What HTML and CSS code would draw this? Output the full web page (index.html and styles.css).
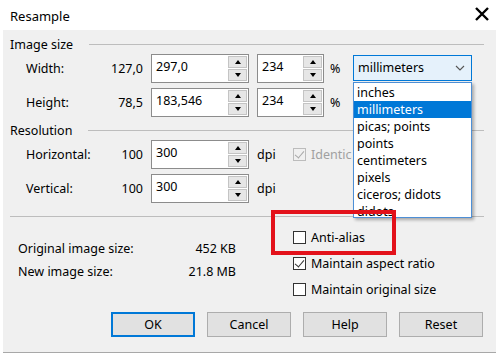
FILE: index.html
```html
<!DOCTYPE html>
<html lang="en">
<head>
    <meta charset="UTF-8">
    <title>Resample</title>
    <link rel="stylesheet" href="styles.css">
</head>
<body>
    <div class="window">
        <div class="titlebar">
            <span class="title">Resample</span>
            <svg class="close" width="14" height="14" viewBox="0 0 14 14">
                <path d="M1 1 L13 13 M13 1 L1 13" stroke="#000" stroke-width="2.4" />
            </svg>
        </div>

        <div class="client">
            <div class="group-head"><span>Image size</span><span class="rule"></span></div>
            <div class="row">
                <span class="label">Width:</span>
                <span class="orig">127,0</span>
                <div class="spin wide">
                    <span class="val">297,0</span>
                    <div class="arrows"><span class="btn up"></span><span class="btn down"></span></div>
                </div>
                <div class="spin narrow">
                    <span class="val">234</span>
                    <div class="arrows"><span class="btn up"></span><span class="btn down"></span></div>
                </div>
                <span class="unit pct">%</span>
                <div class="combo">
                    <span>millimeters</span>
                    <svg width="10" height="6" viewBox="0 0 10 6"><path d="M1 1 L5 5 L9 1" fill="none" stroke="#555" stroke-width="1.1" /></svg>
                </div>
            </div>
            <div class="row">
                <span class="label">Height:</span>
                <span class="orig">78,5</span>
                <div class="spin wide">
                    <span class="val">183,546</span>
                    <div class="arrows"><span class="btn up"></span><span class="btn down"></span></div>
                </div>
                <div class="spin narrow">
                    <span class="val">234</span>
                    <div class="arrows"><span class="btn up"></span><span class="btn down"></span></div>
                </div>
                <span class="unit pct">%</span>
            </div>

            <div class="group-head second"><span>Resolution</span><span class="rule"></span></div>
            <div class="row">
                <span class="label">Horizontal:</span>
                <span class="orig">100</span>
                <div class="spin wide">
                    <span class="val">300</span>
                    <div class="arrows"><span class="btn up"></span><span class="btn down"></span></div>
                </div>
                <span class="unit">dpi</span>
                <label class="check disabled">
                    <span class="box checked"></span>
                    <span class="clip">Identical values</span>
                </label>
            </div>
            <div class="row">
                <span class="label">Vertical:</span>
                <span class="orig">100</span>
                <div class="spin wide">
                    <span class="val">300</span>
                    <div class="arrows"><span class="btn up"></span><span class="btn down"></span></div>
                </div>
                <span class="unit">dpi</span>
            </div>

            <div class="separator"></div>

            <div class="bottom">
                <div class="info">
                    <div class="info-row"><span>Original image size:</span><span>452 KB</span></div>
                    <div class="info-row"><span>New image size:</span><span>21.8 MB</span></div>
                </div>
                <div class="options">
                    <label class="check"><span class="box"></span><span>Anti-alias</span></label>
                    <label class="check"><span class="box checked"></span><span>Maintain aspect ratio</span></label>
                    <label class="check"><span class="box"></span><span>Maintain original size</span></label>
                </div>
            </div>

            <div class="buttons">
                <button class="default">OK</button>
                <button>Cancel</button>
                <button>Help</button>
                <button>Reset</button>
            </div>
        </div>

        <ul class="dropdown">
            <li>inches</li>
            <li class="selected">millimeters</li>
            <li>picas; points</li>
            <li>points</li>
            <li>centimeters</li>
            <li>pixels</li>
            <li>ciceros; didots</li>
            <li>didots</li>
        </ul>

        <div class="highlight"></div>
    </div>
</body>
</html>
```

FILE: styles.css
```css
body {
    margin: 0;
    font-family: "Noto Sans", "Open Sans", sans-serif;
    font-size: 12.5px;
    color: #000;
    background: #fff;
}
.window {
    position: relative;
    width: 500px;
    height: 355px;
    background: #fff;
    overflow: hidden;
}
.titlebar {
    height: 30px;
    display: flex;
    align-items: center;
    justify-content: space-between;
    padding: 0 11px 0 10px;
}
.title {
    font-size: 13px;
    margin-top: 1px;
}
.close {
    margin-top: -2px;
}
.client {
    margin: 0 4px 0 3px;
    height: 322px;
    background: #f0f0f0;
    border-bottom: 1px solid #a8a8a8;
}
.group-head {
    display: flex;
    align-items: center;
    height: 16px;
    padding: 6px 12px 0 7px;
    margin-bottom: 2px;
}
.group-head.second {
    padding-top: 0;
}
.group-head .rule {
    flex: 1;
    height: 1px;
    background: #bdbdbd;
    margin-left: 16px;
}
.row {
    display: flex;
    align-items: center;
    height: 29px;
    margin-bottom: 5px;
    padding-left: 23px;
}
.label {
    width: 78px;
}
.orig {
    width: 39px;
    text-align: right;
    margin-right: 8px;
}
.spin {
    display: flex;
    align-items: stretch;
    height: 27px;
    border: 1px solid #8c8c8c;
    background: #fff;
    margin-right: 8px;
}
.spin.wide {
    width: 96px;
}
.spin.narrow {
    width: 65px;
    margin-right: 6px;
}
.spin .val {
    flex: 1;
    padding: 3px 0 0 4px;
}
.arrows {
    width: 19px;
    display: flex;
    flex-direction: column;
    gap: 1px;
    padding: 1px 1px 1px 0;
}
.arrows .btn {
    flex: 1;
    background: #e6e6e6;
    border: 1px solid #c4c4c4;
    position: relative;
}
.arrows .btn::after {
    content: "";
    position: absolute;
    left: 50%;
    top: 50%;
    margin-left: -3px;
    border-left: 3px solid transparent;
    border-right: 3px solid transparent;
}
.arrows .up::after {
    margin-top: -2px;
    border-bottom: 4px solid #000;
}
.arrows .down::after {
    margin-top: -2px;
    border-top: 4px solid #000;
}
.unit {
    width: 28px;
}
.unit.pct {
    width: 23px;
}
.combo {
    width: 107px;
    height: 24px;
    display: flex;
    align-items: center;
    justify-content: space-between;
    padding: 0 6px 0 4px;
    background: #e5f1fb;
    border: 1px solid #0078d7;
    margin-top: -2px;
}
.check {
    display: flex;
    align-items: center;
    gap: 5px;
    margin-left: 8px;
}
.box {
    flex-shrink: 0;
    width: 13px;
    height: 13px;
    box-sizing: border-box;
    border: 1px solid #333;
    background: #fff;
    position: relative;
}
.box.checked::after {
    content: "";
    position: absolute;
    left: 3px;
    top: 0px;
    width: 4px;
    height: 8px;
    border-right: 1.5px solid #333;
    border-bottom: 1.5px solid #333;
    transform: rotate(40deg);
}
.check.disabled {
    color: #a0a0a0;
    width: 59px;
    overflow: hidden;
}
.check.disabled .clip {
    white-space: nowrap;
}
.check.disabled .box {
    border-color: #bcbcbc;
    background: #f0f0f0;
}
.check.disabled .box.checked::after {
    border-color: #a8a8a8;
}
.separator {
    height: 1px;
    background: #bdbdbd;
    margin: 13px 12px 0 7px;
}
.bottom {
    display: flex;
    margin-top: 7px;
    height: 78px;
}
.info {
    width: 218px;
    margin: 13px 0 0 15px;
}
.info-row {
    height: 23px;
    display: flex;
    align-items: center;
    justify-content: space-between;
}
.options {
    margin-left: 49px;
}
.options .check {
    height: 26px;
}
.buttons {
    display: flex;
    justify-content: flex-end;
    gap: 12px;
    padding-right: 13px;
    margin-top: 10px;
}
button {
    width: 84px;
    height: 25px;
    font-family: inherit;
    font-size: 12.5px;
    background: #e1e1e1;
    border: 1px solid #adadad;
    padding: 0;
    color: #000;
}
button.default {
    border: 2px solid #0078d7;
}
.dropdown {
    position: absolute;
    left: 353px;
    top: 82px;
    width: 117px;
    height: 133px;
    margin: 0;
    padding: 1px 0 0;
    list-style: none;
    background: #fff;
    border: 1px solid #4d8fd6;
    box-shadow: 2px 2px 3px rgba(0, 0, 0, 0.3);
    overflow: hidden;
}
.dropdown li {
    height: 17px;
    line-height: 17px;
    padding-left: 3px;
}
.dropdown li.selected {
    background: #0078d7;
    color: #fff;
}
.highlight {
    position: absolute;
    left: 271px;
    top: 210px;
    width: 117px;
    height: 37px;
    border: 4px solid #e3121b;
}
```
